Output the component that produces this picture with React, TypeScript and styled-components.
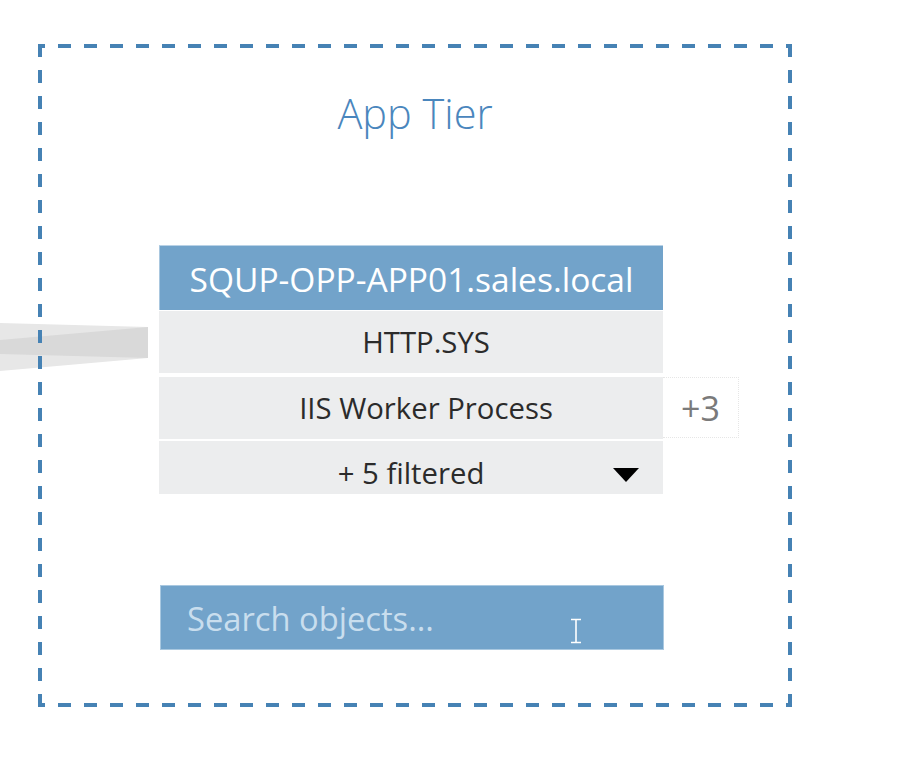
import React from "react";
import styled, { createGlobalStyle } from "styled-components";

const GlobalStyle = createGlobalStyle`
  html, body { margin: 0; padding: 0; background: #ffffff; }
  body { font-family: "Open Sans", "Noto Sans", sans-serif; }
  * { box-sizing: border-box; }
`;

const BLUE = "#4682b4";

const Canvas = styled.div`
  position: relative;
  width: 898px;
  height: 777px;
  padding: 44px 0 0 38px;
  overflow: hidden;
`;

const EdgeSvg = styled.svg`
  position: absolute;
  left: 0;
  top: 300px;
`;

const TierGroup = styled.section`
  position: relative;
  width: 754px;
  height: 663px;
  display: flex;
  flex-direction: column;
  padding: 45px 0 0 121px;
  background:
    repeating-linear-gradient(90deg, ${BLUE} 0 7px, transparent 7px 20px, ${BLUE} 20px 26px) left top / 100% 4px no-repeat,
    repeating-linear-gradient(90deg, ${BLUE} 0 7px, transparent 7px 20px, ${BLUE} 20px 26px) left bottom / 100% 4px no-repeat,
    repeating-linear-gradient(180deg, ${BLUE} 0 13px, transparent 13px 26px) left top / 4px 100% no-repeat,
    repeating-linear-gradient(180deg, ${BLUE} 0 13px, transparent 13px 26px) right top / 4px 100% no-repeat;
`;

const TierTitle = styled.h2`
  margin: 0 0 0 -121px;
  height: 48px;
  line-height: 48px;
  text-align: center;
  font-size: 41.5px;
  font-weight: 300;
  color: #4a86bd;
`;

const NodeCard = styled.div`
  margin-top: 108px;
  width: 504px;
  display: flex;
  flex-direction: column;
`;

const NodeHeader = styled.div`
  height: 65px;
  background: #72a3ca;
  border-top: 1px solid #b9d2e6;
  border-left: 1px solid #a9c7df;
  color: #ffffff;
  font-size: 33.5px;
  line-height: 66px;
  text-align: center;
  white-space: nowrap;
`;

const ProcessRow = styled.div<{ $h: number; $gap: number; $lh?: number; $indent?: number }>`
  position: relative;
  height: ${(p) => p.$h}px;
  margin-top: ${(p) => p.$gap}px;
  padding-left: ${(p) => p.$indent ?? 0}px;
  background: #ecedee;
  color: #2b2b2b;
  font-size: 29.3px;
  line-height: ${(p) => p.$lh ?? p.$h}px;
  text-align: center;
  white-space: nowrap;
`;

const CountBadge = styled.div`
  position: absolute;
  left: 100%;
  top: 0;
  width: 76px;
  height: 61px;
  border: 1px dotted #e6e6e6;
  border-left: none;
  background: #ffffff;
  color: #7a7a7a;
  font-size: 34px;
  line-height: 60px;
  text-align: center;
`;

const Caret = styled.span`
  position: absolute;
  right: 24px;
  top: 27px;
  width: 0;
  height: 0;
  border-left: 13.5px solid transparent;
  border-right: 13.5px solid transparent;
  border-top: 14px solid #000000;
`;

const SearchBox = styled.div`
  position: relative;
  margin-top: 91px;
  margin-left: 1px;
  width: 504px;
  height: 65px;
  background: #72a3ca;
  border: 1px solid #a9c8e0;
  padding-left: 26px;
  color: #c9deee;
  font-size: 32.7px;
  line-height: 65px;
  white-space: nowrap;
`;

const TextCursor = styled.svg`
  position: absolute;
  left: 409px;
  top: 32px;
`;

export default function App() {
  return (
    <>
      <GlobalStyle />
      <Canvas>
        <EdgeSvg width="160" height="90" viewBox="0 300 160 90">
          <polygon points="0,323 148,327 148,358 0,371" fill="#e7e7e7" />
          <polygon points="0,340 148,327 148,358 0,354" fill="#d9d9d9" />
        </EdgeSvg>
        <TierGroup>
          <TierTitle>App Tier</TierTitle>
          <NodeCard>
            <NodeHeader>SQUP-OPP-APP01.sales.local</NodeHeader>
            <ProcessRow $h={62} $gap={1} $indent={30}>HTTP.SYS</ProcessRow>
            <ProcessRow $h={62} $gap={4} $indent={30}>
              IIS Worker Process
              <CountBadge>+3</CountBadge>
            </ProcessRow>
            <ProcessRow $h={53} $gap={2} $lh={64}>
              + 5 filtered
              <Caret />
            </ProcessRow>
          </NodeCard>
          <SearchBox>
            Search objects...
            <TextCursor width="12" height="26" viewBox="0 0 12 26">
              <path d="M1 1.5h10M1 24.5h10M6 1.5v23" stroke="#ffffff" strokeWidth="1.6" fill="none" />
            </TextCursor>
          </SearchBox>
        </TierGroup>
      </Canvas>
    </>
  );
}
